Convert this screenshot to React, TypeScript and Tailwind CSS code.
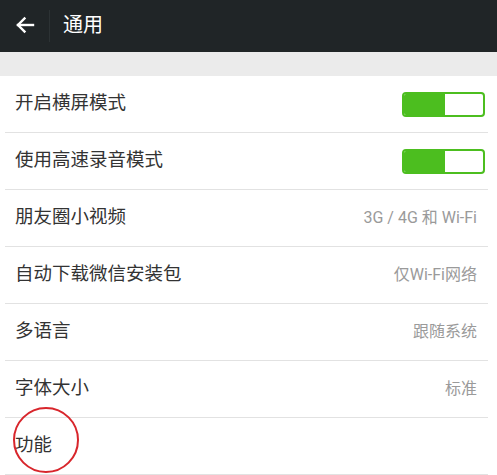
import React from 'react';

const font = { fontFamily: '"Roboto", "Noto Sans CJK SC", sans-serif' };

interface RowProps {
  label: string;
  value?: string;
  toggle?: boolean;
}

const Toggle: React.FC = () => (
  <div className="flex h-[25px] w-[83px] overflow-hidden rounded-[4px] border-2 border-[#4cbe1f] bg-white">
    <div className="h-full w-[41px] bg-[#4cbe1f]" />
  </div>
);

const Row: React.FC<RowProps> = ({ label, value, toggle }) => (
  <div className="flex h-[57px] items-center justify-between border-b border-[#e2e2e2] pl-[10px] pr-[3px]">
    <span className="text-[18.5px] text-[#333333]">{label}</span>
    {toggle ? <Toggle /> : <span className="pr-[8px] text-[16px] text-[#9a9a9a]">{value}</span>}
  </div>
);

export default function App() {
  return (
    <div className="relative h-[475px] w-[497px] overflow-hidden bg-white" style={font}>
      <header className="flex h-[52px] items-center bg-[#202527]">
        <div className="flex w-[49px] justify-center pb-[2px] pl-[1px]">
          <svg width="20" height="18" viewBox="0 0 20 18" fill="none" stroke="white" strokeWidth="2.4" strokeLinecap="square">
            <path d="M18 9H3" />
            <path d="M9.5 2.5L3 9l6.5 6.5" />
          </svg>
        </div>
        <div className="h-[32px] w-px bg-[#2c3234]" />
        <span className="pb-[2px] pl-[13px] text-[20px] text-white">通用</span>
      </header>
      <div className="h-[24px] bg-[#ebebeb]" />
      <div className="pl-[5px] pr-[9px]">
        <Row label="开启横屏模式" toggle />
        <Row label="使用高速录音模式" toggle />
        <Row label="朋友圈小视频" value="3G / 4G 和 Wi-Fi" />
        <Row label="自动下载微信安装包" value="仅Wi-Fi网络" />
        <Row label="多语言" value="跟随系统" />
        <Row label="字体大小" value="标准" />
        <Row label="功能" />
      </div>
      <div className="absolute left-[13px] top-[407px] h-[66px] w-[66px] rounded-full border-2 border-[#d8262c]" />
    </div>
  );
}
